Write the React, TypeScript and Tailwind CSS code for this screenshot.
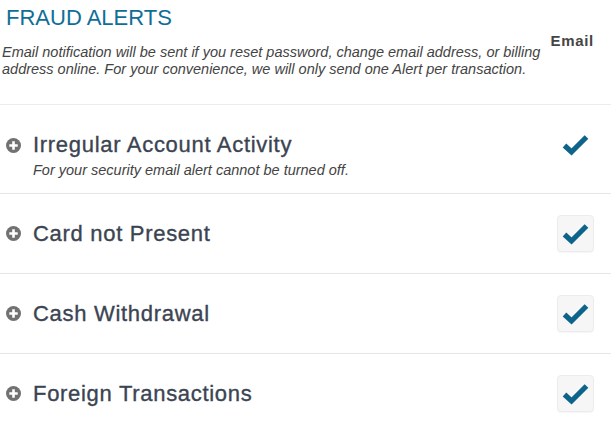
import React from "react";

function PlusIcon() {
  return (
    <svg width="15" height="15" viewBox="0 0 15 15" className="shrink-0">
      <circle cx="7.5" cy="7.5" r="7.5" fill="#727272" />
      <path d="M7.5 3.3v8.4M3.3 7.5h8.4" stroke="#fff" strokeWidth="2.6" />
    </svg>
  );
}

function Check() {
  return (
    <svg width="27" height="22" viewBox="0 0 27 22">
      <polyline
        points="2.5,11.5 9.5,18 24.5,3"
        fill="none"
        stroke="#0d6389"
        strokeWidth="5.2"
        strokeLinecap="butt"
        strokeLinejoin="miter"
      />
    </svg>
  );
}

function Box({ boxed }: { boxed: boolean }) {
  return (
    <div
      className={
        "w-[37px] h-[37px] flex items-center justify-center rounded-[4px] " +
        (boxed ? "bg-[#f6f6f6] border border-[#ececec] shadow-[0_1px_1px_rgba(0,0,0,0.04)]" : "")
      }
    >
      <Check />
    </div>
  );
}

const labelCls =
  "text-[22px] leading-[26px] tracking-[0.7px] text-[#3b4452] [-webkit-text-stroke:0.35px_#3b4452] font-['Liberation_Sans',Arial,sans-serif]";

function Row({ label }: { label: string }) {
  return (
    <div className="h-[80px] border-t border-[#e6e6e6] flex items-center justify-between pl-[6px] pr-[17px]">
      <div className="flex items-center gap-[12px]">
        <PlusIcon />
        <span className={labelCls}>{label}</span>
      </div>
      <Box boxed />
    </div>
  );
}

export default function App() {
  return (
    <div className="w-[611px] h-[429px] overflow-hidden bg-white font-['Liberation_Sans',Arial,sans-serif]">
      <h2 className="pl-[6px] pt-[5px] text-[22px] leading-[26px] text-[#106e96]">FRAUD ALERTS</h2>
      <div className="flex justify-between h-[73px]">
        <p className="pl-[2px] pt-[13px] text-[14.5px] leading-[17px] italic text-[#444]">
          Email notification will be sent if you reset password, change email address, or billing
          <br />
          address online. For your convenience, we will only send one Alert per transaction.
        </p>
        <div className="pr-[17px] pt-[1px] text-[15px] leading-[18px] font-bold tracking-[0.7px] text-[#454545]">
          Email
        </div>
      </div>
      <div className="h-[89px] border-t border-[#ececec] pl-[6px] pr-[17px] pt-[27px]">
        <div className="flex items-center justify-between h-[26px]">
          <div className="flex items-center gap-[12px]">
            <PlusIcon />
            <span className={labelCls}>Irregular Account Activity</span>
          </div>
          <Box boxed={false} />
        </div>
        <p className="mt-[4px] pl-[27px] text-[14.5px] leading-[17px] italic text-[#444]">
          For your security email alert cannot be turned off.
        </p>
      </div>
      <Row label="Card not Present" />
      <Row label="Cash Withdrawal" />
      <Row label="Foreign Transactions" />
    </div>
  );
}
